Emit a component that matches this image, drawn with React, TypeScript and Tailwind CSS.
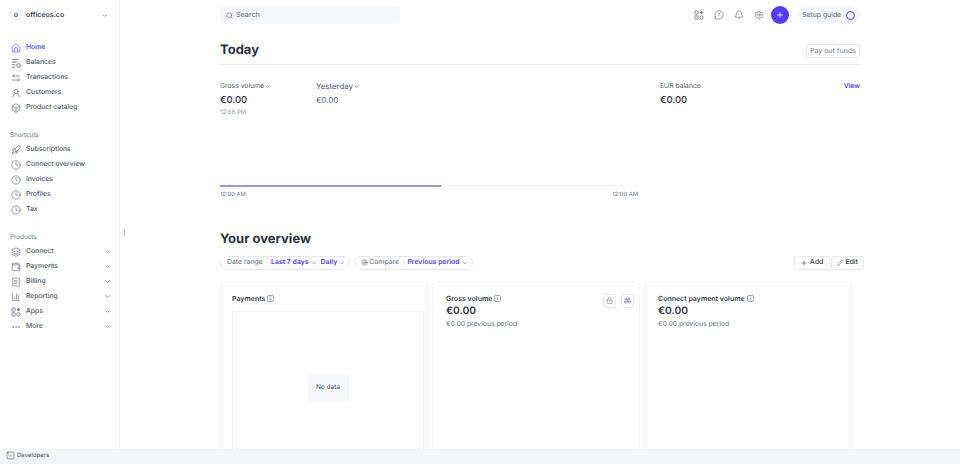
import {
  ChevronDown,
  Search,
  ArrowLeftRight,
  UserRound,
  Box,
  Rocket,
  Clock,
  Layers,
  Wallet,
  ReceiptText,
  ChartColumn,
  Ellipsis,
  MessageCircleQuestion,
  Bell,
  Settings,
  Plus,
  Pencil,
  SquareTerminal,
  Lock,
  Binoculars,
  Target,
} from "lucide-react";

const HomeIcon = ({ size = 10 }: { size?: number }) => (
  <svg width={size} height={size} viewBox="0 0 12 12" fill="none" stroke="currentColor" strokeWidth="0.9" className="shrink-0">
    <path d="M1.5 5 6 1.2 10.5 5v5.3a.5.5 0 0 1-.5.5H2a.5.5 0 0 1-.5-.5z" />
    <path d="M4.2 10.8V7.4a1.8 1.8 0 0 1 3.6 0v3.4" />
  </svg>
);

const BalancesIcon = ({ size = 10 }: { size?: number }) => (
  <svg width={size} height={size} viewBox="0 0 12 12" fill="none" stroke="currentColor" strokeWidth="0.9" className="shrink-0">
    <path d="M1 2h8M1 5h6M1 8h4M1 11h4" />
    <circle cx="9" cy="9" r="2.2" />
  </svg>
);

const AppsIcon = ({ size = 10 }: { size?: number }) => (
  <svg width={size} height={size} viewBox="0 0 12 12" fill="none" stroke="currentColor" strokeWidth="0.9" className="shrink-0">
    <rect x="1" y="1" width="4" height="4" rx="1" />
    <path d="M9 .8v4.4M6.8 3h4.4" />
    <rect x="1" y="7" width="4" height="4" rx="1" />
    <rect x="7" y="7" width="4" height="4" rx="2" />
  </svg>
);

const InfoBox = () => (
  <svg width="7" height="7" viewBox="0 0 8 8" fill="none" stroke="currentColor" strokeWidth="0.7" className="shrink-0 text-[#5b6478]">
    <rect x="0.5" y="0.5" width="7" height="7" rx="1.5" />
    <path d="M4 3.4v2.8M4 1.8v.7" />
  </svg>
);

const mainNav = [
  { label: "Home", icon: HomeIcon, active: true },
  { label: "Balances", icon: BalancesIcon },
  { label: "Transactions", icon: ArrowLeftRight },
  { label: "Customers", icon: UserRound },
  { label: "Product catalog", icon: Box },
];

const shortcuts = [
  { label: "Subscriptions", icon: Rocket },
  { label: "Connect overview", icon: Clock },
  { label: "Invoices", icon: Clock },
  { label: "Profiles", icon: Clock },
  { label: "Tax", icon: Clock },
];

const products = [
  { label: "Connect", icon: Layers },
  { label: "Payments", icon: Wallet },
  { label: "Billing", icon: ReceiptText },
  { label: "Reporting", icon: ChartColumn },
  { label: "Apps", icon: AppsIcon },
  { label: "More", icon: Ellipsis },
];

const NavRow = ({ item, chevron }: { item: any; chevron?: boolean }) => {
  const Icon = item.icon;
  return (
    <div className={`flex items-center h-[15px] pl-[11px] pr-[8px] ${item.active ? "text-[#635bff]" : "text-[#4f566b]"}`}>
      <Icon size={10} strokeWidth={1.4} className="shrink-0" />
      <span className={`ml-[5px] text-[6.8px] flex-1 ${item.active ? "font-semibold" : "font-medium"}`}>{item.label}</span>
      {chevron && <ChevronDown size={7} strokeWidth={2.2} className="text-[#5b6478]" />}
    </div>
  );
};

const Pill = ({ children }: { children: React.ReactNode }) => (
  <div className="flex items-center h-[14px] pl-[6px] pr-[4px] rounded-full border border-[#e6e9f0] text-[6.9px] whitespace-nowrap">{children}</div>
);

const Metric = ({ title, withActions }: { title: string; withActions?: boolean }) => (
  <div className="relative w-[208px] h-[200px] shrink-0 rounded-[5px] border border-[#f1f3f7] pl-[13px] pt-[11px]">
    <div className="flex items-center gap-[2px] text-[7px] leading-[10px] font-semibold text-[#353a4a]">
      {title}
      <InfoBox />
    </div>
    <div className="text-[10.3px] font-semibold text-[#30313d] leading-[14px]">€0.00</div>
    <div className="text-[6.8px] text-[#687385] leading-[10px] mt-px">€0.00 previous period</div>
    {withActions && (
      <div className="absolute top-[11px] right-[5px] flex gap-[5px] text-[#5b6478]">
        <div className="w-[13px] h-[14px] rounded-[3px] border border-[#e6e9f0] flex items-center justify-center">
          <Lock size={7} strokeWidth={1.6} />
        </div>
        <div className="w-[13px] h-[14px] rounded-[3px] border border-[#e6e9f0] flex items-center justify-center">
          <Binoculars size={7} strokeWidth={1.6} />
        </div>
      </div>
    )}
  </div>
);

export default function App() {
  return (
    <div className="relative flex flex-col h-[464px] w-[960px] overflow-hidden bg-white font-['Inter',sans-serif] text-[#4f566b] [text-rendering:geometricPrecision]">
      <div className="flex flex-1 min-h-0">
        <aside className="w-[120px] shrink-0 border-r border-[#eff1f5] pt-[9px]">
          <div className="flex items-center h-[12px] pl-[10px] pr-[11px]">
            <div className="w-[12px] h-[12px] rounded-[2px] bg-[#f5f7fa] flex items-center justify-center text-[7px] font-semibold text-[#414b60]">o</div>
            <span className="ml-[4px] text-[7px] font-semibold text-[#353a4a] flex-1">officeos.co</span>
            <ChevronDown size={7} strokeWidth={2.2} className="text-[#5b6478]" />
          </div>
          <div className="mt-[19px]">
            {mainNav.map((item) => (
              <NavRow key={item.label} item={item} />
            ))}
          </div>
          <div className="mt-[16px] pl-[10px] text-[6.3px] text-[#687385] h-[10px] flex items-center">Shortcuts</div>
          <div className="mt-px">
            {shortcuts.map((item) => (
              <NavRow key={item.label} item={item} />
            ))}
          </div>
          <div className="mt-[16px] pl-[10px] text-[6.3px] text-[#687385] h-[10px] flex items-center">Products</div>
          <div className="mt-px">
            {products.map((item) => (
              <NavRow key={item.label} item={item} chevron />
            ))}
          </div>
        </aside>

        <main className="flex-1 min-w-0 overflow-hidden pl-[100px] pr-[100px] pt-[6px]">
          <div className="flex items-center h-[18px]">
            <div className="flex items-center w-[180px] h-[18px] rounded-[4px] bg-[#f5f7fa] pl-[6px] text-[7.2px] text-[#5b6478]">
              <Search size={7} strokeWidth={2} />
              <span className="ml-[3px]">Search</span>
            </div>
            <div className="ml-auto flex items-center text-[#5b6478]">
              <AppsIcon size={10} />
              <MessageCircleQuestion size={10} strokeWidth={1.5} className="ml-[10px]" />
              <Bell size={10} strokeWidth={1.5} className="ml-[10px]" />
              <Settings size={10} strokeWidth={1.5} className="ml-[10px]" />
              <div className="ml-[7px] w-[18px] h-[18px] rounded-full bg-[#533afd] flex items-center justify-center text-white">
                <Plus size={8} strokeWidth={2.4} />
              </div>
              <div className="ml-[9px] flex items-center w-[62px] h-[18px] rounded-full bg-[#f5f7fa] pl-[4px] text-[6.9px] text-[#5b6478] whitespace-nowrap">
                Setup guide
                <span className="ml-[5px] w-[9px] h-[9px] rounded-full border-[1.5px] border-[#533afd]" />
              </div>
            </div>
          </div>

          <div className="flex items-center justify-between h-[20px] mt-[17px]">
            <h1 className="text-[13px] font-bold text-[#30313d] -mt-px">Today</h1>
            <div className="h-[14px] px-[3px] rounded-[2px] border border-[#e6e9f0] flex items-center text-[7px] font-medium text-[#8792a2]">Pay out funds</div>
          </div>
          <div className="h-px bg-[#e6e9f0] mt-[3px]" />

          <div className="flex mt-[15px]">
            <div className="w-[96px]">
              <div className="flex items-center text-[6.8px] leading-[12px]">
                Gross volume
                <ChevronDown size={7} strokeWidth={2.2} />
              </div>
              <div className="text-[9.5px] text-[#30313d] font-medium leading-[14px] mt-[2px]">€0.00</div>
              <div className="text-[6px] text-[#8792a2] leading-[10px]">12:58 PM</div>
            </div>
            <div className="w-[344px]">
              <div className="flex items-center text-[7.9px] leading-[12px]">
                Yesterday
                <ChevronDown size={7} strokeWidth={2.2} />
              </div>
              <div className="text-[8px] text-[#5b6478] leading-[14px] mt-px">€0.00</div>
            </div>
            <div className="flex-1">
              <div className="flex justify-between text-[6.8px] leading-[12px]">
                EUR balance
                <span className="text-[#533afd] font-semibold">View</span>
              </div>
              <div className="text-[9.5px] text-[#30313d] font-medium leading-[14px] mt-[2px]">€0.00</div>
            </div>
          </div>

          <div className="flex w-[418px] mt-[67px]">
            <div className="h-[1.5px] w-[221px] bg-[#a48ff8]" />
            <div className="flex-1 border-t border-dotted border-[#e3e6ec]" />
          </div>
          <div className="flex justify-between w-[418px] text-[5.8px] text-[#687385] mt-[4px] leading-[8px]">
            <span>12:00 AM</span>
            <span>12:00 AM</span>
          </div>

          <h2 className="text-[13px] font-bold text-[#30313d] leading-[20px] mt-[30px]">Your overview</h2>

          <div className="flex items-center mt-[7px] w-[644px]">
            <Pill>
              <span className="text-[#5b6478]">Date range</span>
              <span className="mx-[3px] text-[#d5dbe4]">|</span>
              <span className="text-[#533afd] font-semibold">Last 7 days</span>
              <ChevronDown size={6} strokeWidth={2.2} className="ml-[2px] mr-[4px] text-[#533afd]" />
              <span className="text-[#533afd] font-semibold">Daily</span>
              <ChevronDown size={6} strokeWidth={2.2} className="ml-[2px] text-[#533afd]" />
            </Pill>
            <div className="ml-[4px]">
              <Pill>
                <Target size={7} strokeWidth={1.5} className="text-[#5b6478] mr-px" />
                <span className="text-[#5b6478]">Compare</span>
                <span className="mx-[3px] text-[#d5dbe4]">|</span>
                <span className="text-[#533afd] font-semibold">Previous period</span>
                <ChevronDown size={6} strokeWidth={2.2} className="ml-[2px] text-[#533afd]" />
              </Pill>
            </div>
            <div className="ml-auto flex gap-px">
              <div className="flex items-center h-[14px] pl-[5px] pr-[6px] rounded-[3px] border border-[#e6e9f0] text-[7px] font-medium text-[#353a4a]">
                <Plus size={8} strokeWidth={1.6} className="mr-[2px]" />
                Add
              </div>
              <div className="flex items-center h-[14px] px-[5px] rounded-[3px] border border-[#e6e9f0] text-[7px] font-medium text-[#353a4a]">
                <Pencil size={6} strokeWidth={1.6} className="mr-[2px]" />
                Edit
              </div>
            </div>
          </div>

          <div className="flex gap-[4px] mt-[12px]">
            <div className="w-[208px] h-[200px] shrink-0 rounded-[5px] border border-[#f1f3f7] pl-[11px] pt-[11px] pr-[3px]">
              <div className="flex items-center gap-[2px] text-[7px] leading-[10px] font-semibold text-[#353a4a]">
                Payments
                <InfoBox />
              </div>
              <div className="mt-[7px] h-[150px] border border-dotted border-[#e3e6ec] flex justify-center pt-[62px]">
                <div className="w-[41px] h-[28px] rounded-[2px] bg-[#f5f7fa] flex items-center justify-center text-[6.5px] text-[#414b60]">No data</div>
              </div>
            </div>
            <Metric title="Gross volume" withActions />
            <Metric title="Connect payment volume" />
          </div>
        </main>
      </div>

      <footer className="flex items-center h-[15px] shrink-0 bg-[#f2f5f9] pl-[6px] pb-[2px] text-[6px] text-[#414b60]">
        <SquareTerminal size={9} strokeWidth={1.4} />
        <span className="ml-[2px]">Developers</span>
      </footer>

      <div className="absolute left-[123.5px] top-[229px] w-[1.5px] h-[7px] bg-[#b8bfca]" />
    </div>
  );
}
